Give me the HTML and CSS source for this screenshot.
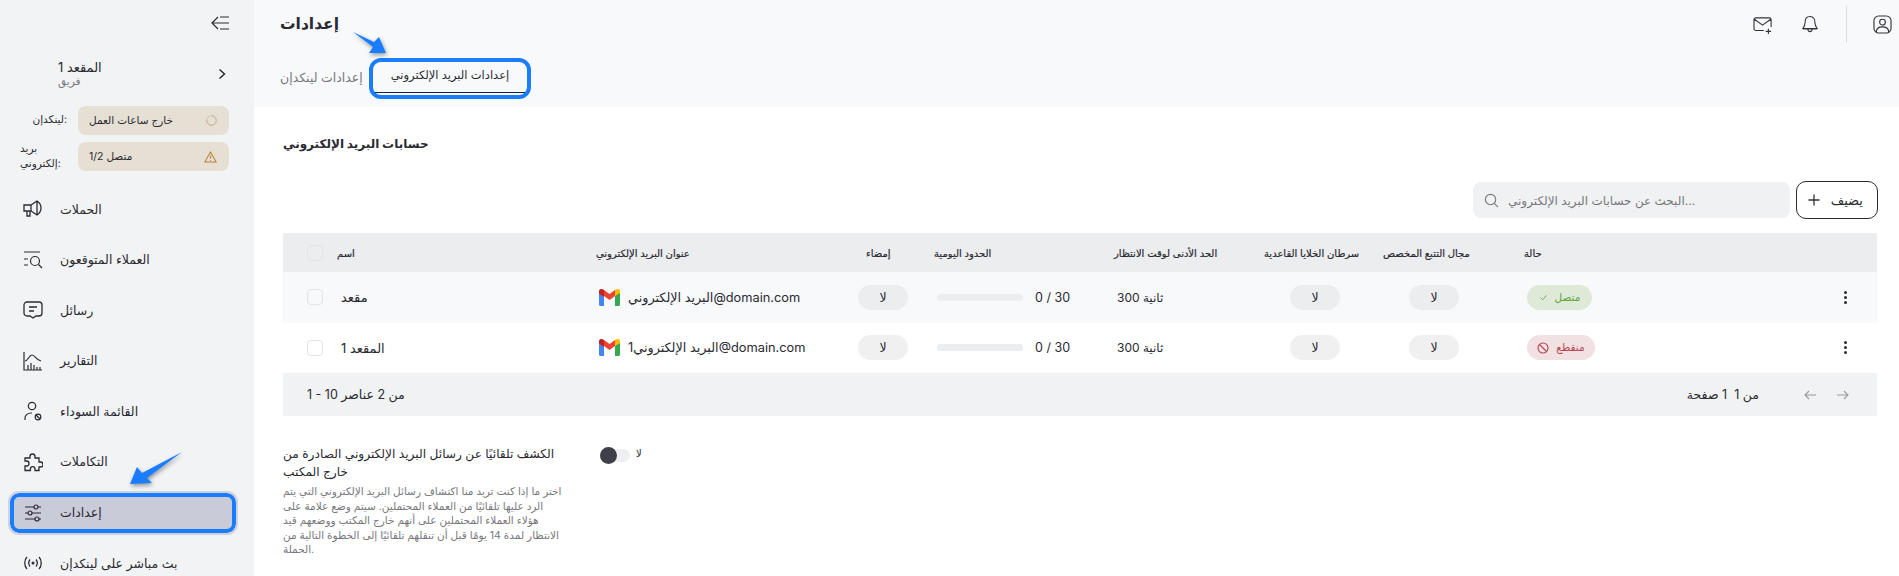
FILE: index.html
```html
<!DOCTYPE html>
<html lang="ar" dir="ltr">
<head>
    <meta charset="UTF-8">
    <title>إعدادات</title>
    <link rel="stylesheet" href="styles.css">
</head>
<body>
    <!-- Sidebar -->
    <aside class="sidebar">
        <div class="collapse-row">
            <svg class="icon-collapse" viewBox="0 0 18 14" fill="none" stroke="#2b2b33" stroke-width="1.2"><path d="M7 1 1 7l6 6M1 7h17M9 1h9M9 13h9" /></svg>
        </div>
        <div class="team-row">
            <div class="team-text">
                <div class="team-name">المقعد 1</div>
                <div class="team-type">فريق</div>
            </div>
            <svg class="icon-chevron" viewBox="0 0 8 12" fill="none" stroke="#222" stroke-width="1.4"><path d="m1.5 1.500 5 4.500-5 4.500" /></svg>
        </div>
        <div class="status-row">
            <span class="status-label">لينكدإن:</span>
            <div class="status-box">
                <span>خارج ساعات العمل</span>
                <svg class="status-icon" viewBox="0 0 12 12" fill="none" stroke="#b9a47f" stroke-width="1"><path d="M6 .8a5.200 5.200 0 1 1-5.200 5.200" /><path d="M.8 6A5.200 5.200 0 0 1 6 .8" stroke-dasharray="1 1" /></svg>
            </div>
        </div>
        <div class="status-row">
            <span class="status-label wrap">بريد إلكتروني:</span>
            <div class="status-box">
                <span>1/2 متصل</span>
                <svg class="status-icon warn" viewBox="0 0 14 13" fill="none" stroke="#b97f35" stroke-width="1.1"><path d="M7 1 .8 12h12.400zM7 5v3.500M7 9.800v.8" /></svg>
            </div>
        </div>
        <nav class="nav">
            <a class="nav-item">
                <svg class="nav-icon" viewBox="0 0 20 20" fill="none" stroke="#2b2b33" stroke-width="1.300"><path d="M1 6h7v6H1zM8 6l6-4c3 2 4 5 4 7s-1 5-4 7l-6-4M4 12v5h3v-5M14 2v14" /></svg>
                <span>الحملات</span>
            </a>
            <a class="nav-item">
                <svg class="nav-icon" viewBox="0 0 20 20" fill="none" stroke="#2b2b33" stroke-width="1.200"><path d="M1 2h16M1 9h4M1 15h4" /><circle cx="12" cy="11" r="4.500" /><path d="m15.500 14.500 3.500 3.500" /></svg>
                <span>العملاء المتوقعون</span>
            </a>
            <a class="nav-item">
                <svg class="nav-icon" viewBox="0 0 20 20" fill="none" stroke="#2b2b33" stroke-width="1.300"><path d="M4 2h12a3 3 0 0 1 3 3v8a3 3 0 0 1-3 3h-3l-3 2-3-2H4a3 3 0 0 1-3-3V5a3 3 0 0 1 3-3zM6 7h8M6 11h5" /></svg>
                <span>رسائل</span>
            </a>
            <a class="nav-item">
                <svg class="nav-icon" viewBox="0 0 20 20" fill="none" stroke="#2b2b33" stroke-width="1.200"><path d="M1 1v18h18M2 10c3 0 4-6 7-6s4 5 9 6M5 19v-5M8 19v-7M11 19v-5M14 19v-3M17 19v-3" /></svg>
                <span>التقارير</span>
            </a>
            <a class="nav-item">
                <svg class="nav-icon" viewBox="0 0 20 20" fill="none" stroke="#2b2b33" stroke-width="1.200"><circle cx="9" cy="5" r="3.700" /><path d="M2 19v-2c0-3 3-5 6-5h1" /><circle cx="15" cy="16" r="2.800" /><path d="m13 14 4 4" /></svg>
                <span>القائمة السوداء</span>
            </a>
            <a class="nav-item">
                <svg class="nav-icon" viewBox="0 0 20 20" fill="none" stroke="#2b2b33" stroke-width="1.300"><path d="M7 4.500a2.500 2.500 0 0 1 5 0V6h4v4h1.500a2.300 2.300 0 0 1 0 5H16v3.500h-4V17a2.300 2.300 0 0 0-4.600 0v1.500H2V14h1.500a2.500 2.500 0 0 0 0-5H2V6h5z" /></svg>
                <span>التكاملات</span>
            </a>
            <a class="nav-item active">
                <svg class="nav-icon" viewBox="0 0 20 20" fill="none" stroke="#2b2b33" stroke-width="1.200"><path d="M2 4h9M15 4h3M2 10h3M9 10h9M2 16h10M16 16h2" /><circle cx="13" cy="4" r="2" /><circle cx="7" cy="10" r="2" /><circle cx="14" cy="16" r="2" /></svg>
                <span>إعدادات</span>
            </a>
            <a class="nav-item">
                <svg class="nav-icon" viewBox="0 0 20 20" fill="none" stroke="#2b2b33" stroke-width="1.300"><path d="M4 4c-3 3-3 9 0 12M16 4c3 3 3 9 0 12M7 6.500c-1.500 2-1.500 5 0 7M13 6.500c1.500 2 1.500 5 0 7" /><circle cx="10" cy="10" r=".9" fill="#2b2b33" /></svg>
                <span>بث مباشر على لينكدإن</span>
            </a>
        </nav>
        <!-- annotation arrow -->
        <svg class="arrow arrow-side" viewBox="0 0 60 36"><polygon points="2,34 9,17 14,23 54,2 19,28 24,33" /></svg>
    </aside>

    <main class="main">
        <header class="top">
            <div class="top-row">
                <h1 class="page-title">إعدادات</h1>
                <div class="top-actions">
                    <svg class="top-icon mail" viewBox="0 0 22 20" fill="none" stroke="#33333b" stroke-width="1.200"><path d="M12 15H3a2 2 0 0 1-2-2V3a2 2 0 0 1 2-2h15a2 2 0 0 1 2 2v8M1.500 2.500 10.500 9l9-6.500M17 13v6M14 16h6" /></svg>
                    <svg class="top-icon bell" viewBox="0 0 18 20" fill="none" stroke="#33333b" stroke-width="1.200"><path d="M9 1c-4 0-5.500 3-5.500 6.500 0 3-1 5-2.500 7h16c-1.500-2-2.500-4-2.500-7C14.500 4 13 1 9 1zM6.500 14.500c0 2 1 3.500 2.500 3.500s2.500-1.500 2.500-3.500M1 15h16" /></svg>
                    <span class="top-divider"></span>
                    <svg class="top-icon user" viewBox="0 0 20 20" fill="none" stroke="#33333b" stroke-width="1.200"><rect x="1" y="1" width="18" height="18" rx="5" /><circle cx="10" cy="7.500" r="3" /><path d="M3.500 18c0-4 3-5.500 6.500-5.500s6.500 1.500 6.500 5.500" /></svg>
                </div>
            </div>
            <div class="tabs">
                <a class="tab">إعدادات لينكدإن</a>
                <a class="tab tab-active"><span>إعدادات البريد الإلكتروني</span></a>
            </div>
            <svg class="arrow arrow-top" viewBox="0 0 36 24"><polygon points="1,1 22,11 27,6 34,22 17,22 21,16" /></svg>
        </header>

        <section class="content">
            <h2 class="section-title">حسابات البريد الإلكتروني</h2>

            <div class="toolbar">
                <div class="search">
                    <svg class="search-icon" viewBox="0 0 16 16" fill="none" stroke="#777" stroke-width="1.200"><circle cx="7" cy="7" r="5.500" /><path d="m11 11 4 4" /></svg>
                    <span>البحث عن حسابات البريد الإلكتروني...</span>
                </div>
                <button class="add-btn">
                    <svg class="plus" viewBox="0 0 12 12" fill="none" stroke="#333" stroke-width="1.300"><path d="M6 .5v11M.5 6h11" /></svg>
                    <span>يضيف</span>
                </button>
            </div>

            <div class="table">
                <div class="row head">
                    <span class="check"></span>
                    <span>اسم</span>
                    <span>عنوان البريد الإلكتروني</span>
                    <span class="h-sign">إمضاء</span>
                    <span>الحدود اليومية</span>
                    <span>الحد الأدنى لوقت الانتظار</span>
                    <span>سرطان الخلايا القاعدية</span>
                    <span>مجال التتبع المخصص</span>
                    <span>حالة</span>
                    <span></span>
                </div>
                <div class="row shaded">
                    <span class="check"></span>
                    <span class="name">مقعد</span>
                    <span class="email"><svg class="gmail" viewBox="0 0 21 17"><path fill="#4285f4" d="M0 2v13.500c0 .8.700 1.500 1.500 1.500H5V7z" /><path fill="#34a853" d="M16 7v10h3.500c.8 0 1.500-.7 1.500-1.500V2z" /><path fill="#ea4335" d="M5 7V1l5.500 4L16 1v6l-5.500 4z" /><path fill="#c5221f" d="M0 2v2.500L5 8V1L3 0C1.500-.3 0 .8 0 2z" /><path fill="#fbbc04" d="M16 1v6l5-3V2c0-1.500-1.500-2.500-3-2z" /></svg><span>البريد الإلكتروني@domain.com</span></span>
                    <span class="pill">لا</span>
                    <span class="limit"><span class="bar"></span><span>0 / 30</span></span>
                    <span class="wait">300 ثانية</span>
                    <span class="pill indent">لا</span>
                    <span class="pill indent">لا</span>
                    <span class="badge ok"><svg class="badge-icon" viewBox="0 0 12 12" fill="none" stroke="#5aa63c" stroke-width="1.100"><path d="m2 6 3 3 5-6" /></svg>متصل</span>
                    <span class="kebab"><i></i><i></i><i></i></span>
                </div>
                <div class="row">
                    <span class="check"></span>
                    <span class="name">المقعد 1</span>
                    <span class="email"><svg class="gmail" viewBox="0 0 21 17"><path fill="#4285f4" d="M0 2v13.500c0 .8.700 1.500 1.500 1.500H5V7z" /><path fill="#34a853" d="M16 7v10h3.500c.8 0 1.500-.7 1.500-1.500V2z" /><path fill="#ea4335" d="M5 7V1l5.500 4L16 1v6l-5.500 4z" /><path fill="#c5221f" d="M0 2v2.500L5 8V1L3 0C1.500-.3 0 .8 0 2z" /><path fill="#fbbc04" d="M16 1v6l5-3V2c0-1.500-1.500-2.500-3-2z" /></svg><span>البريد الإلكتروني1@domain.com</span></span>
                    <span class="pill">لا</span>
                    <span class="limit"><span class="bar"></span><span>0 / 30</span></span>
                    <span class="wait">300 ثانية</span>
                    <span class="pill indent">لا</span>
                    <span class="pill indent">لا</span>
                    <span class="badge off"><svg class="badge-icon big" viewBox="0 0 12 12" fill="none" stroke="#b5434f" stroke-width="1.100"><circle cx="6" cy="6" r="5" /><path d="m2.500 2.500 7 7" /></svg>منقطع</span>
                    <span class="kebab"><i></i><i></i><i></i></span>
                </div>
                <div class="table-foot">
                    <span>1 - 10 من 2 عناصر</span>
                    <div class="pager">
                        <span>من 1 &nbsp;1 صفحة</span>
                        <svg class="pager-arrow" viewBox="0 0 12 10" fill="none" stroke="#9a9a9f" stroke-width="1.100"><path d="M5 1 1 5l4 4M1 5h11" /></svg>
                        <svg class="pager-arrow" viewBox="0 0 12 10" fill="none" stroke="#9a9a9f" stroke-width="1.100"><path d="m7 1 4 4-4 4M0 5h11" /></svg>
                    </div>
                </div>
            </div>

            <div class="setting">
                <div class="setting-text">
                    <div class="setting-title">الكشف تلقائيًا عن رسائل البريد الإلكتروني الصادرة من خارج المكتب</div>
                    <p class="setting-desc">اختر ما إذا كنت تريد منا اكتشاف رسائل البريد الإلكتروني التي يتم<br>الرد عليها تلقائيًا من العملاء المحتملين. سيتم وضع علامة على<br>هؤلاء العملاء المحتملين على أنهم خارج المكتب ووضعهم قيد<br>الانتظار لمدة 14 يومًا قبل أن تنقلهم تلقائيًا إلى الخطوة التالية من<br>الحملة.</p>
                </div>
                <div class="toggle"><span class="knob"></span></div>
                <span class="toggle-label">لا</span>
            </div>
        </section>
    </main>
</body>
</html>
```

FILE: styles.css
```css
* {
    box-sizing: border-box;
}

body {
    margin: 0;
    height: 576px;
    overflow: hidden;
    display: flex;
    background-color: #fff;
    color: #2a2a32;
    font-family: Inter, "DejaVu Sans", sans-serif;
    font-size: 12px;
}

/* Sidebar */
.sidebar {
    position: relative;
    width: 254px;
    flex-shrink: 0;
    height: 576px;
    overflow: hidden;
    background-color: #f2f3f5;
}

.collapse-row {
    display: flex;
    justify-content: flex-end;
    padding: 16px 25px 0 0;
    height: 46px;
}

.icon-collapse {
    width: 18px;
    height: 14px;
}

.team-row {
    display: flex;
    align-items: center;
    justify-content: space-between;
    height: 40px;
    margin-top: 8px;
    padding: 0 28px 0 58px;
}

.team-name {
    font-size: 13px;
    line-height: 15px;
}

.team-type {
    font-size: 10.500px;
    line-height: 14px;
    color: #77777d;
}

.icon-chevron {
    width: 8px;
    height: 12px;
}

.status-row {
    display: flex;
    align-items: center;
    justify-content: flex-end;
    height: 29px;
    margin-bottom: 7px;
    padding-right: 25px;
}

.team-row + .status-row {
    margin-top: 12px;
}

.status-label {
    margin-right: 11px;
    font-size: 10.500px;
    line-height: 14.500px;
}

.status-label.wrap {
    width: 40px;
    margin-right: 18px;
}

.status-box {
    display: flex;
    align-items: center;
    justify-content: space-between;
    width: 151px;
    height: 29px;
    padding: 0 12px 0 11px;
    border-radius: 8px;
    background-color: #e6dfd4;
    font-size: 10.500px;
}

.status-icon {
    width: 11px;
    height: 11px;
}

.status-icon.warn {
    width: 13px;
    height: 12px;
}

.nav {
    margin: 18px 0 0 10px;
    width: 226px;
}

.nav-item {
    display: flex;
    align-items: center;
    gap: 17px;
    height: 40px;
    margin-bottom: 10.600px;
    padding-left: 13px;
    font-size: 12.500px;
}

.nav-item.active {
    padding-left: 9px;
    border: 4px solid #1a7cff;
    border-radius: 9px;
    background-color: #c9cbd9;
    outline: 2px solid #cfd1dc;
    outline-offset: 0;
}

.nav-icon {
    width: 20px;
    height: 20px;
    flex-shrink: 0;
}

.arrow {
    position: absolute;
    fill: #1a7cff;
    filter: drop-shadow(1px 2px 2px rgba(0, 0, 0, 0.4));
}

.arrow-side {
    left: 128px;
    top: 450px;
    width: 60px;
    height: 36px;
}

.arrow-top {
    left: 98px;
    top: 31px;
    width: 36px;
    height: 24px;
}

/* Header */
.main {
    flex-grow: 1;
    min-width: 0;
}

.top {
    position: relative;
    height: 107px;
    padding-left: 26px;
    background-color: #f8f9fb;
}

.top-row {
    display: flex;
    align-items: center;
    justify-content: space-between;
    height: 48px;
}

.page-title {
    margin: 0 0 2px;
    font-size: 15.500px;
    font-weight: bold;
}

.top-actions {
    display: flex;
    align-items: center;
    height: 100%;
    padding-right: 7px;
}

.top-icon {
    width: 20px;
    height: 18px;
}

.top-icon.mail {
    margin-top: 3px;
}

.top-icon.bell {
    width: 16px;
    height: 19px;
    margin-left: 29px;
}

.top-divider {
    width: 1px;
    height: 37px;
    margin-left: 28px;
    background-color: #dcdde0;
}

.top-icon.user {
    width: 19px;
    height: 19px;
    margin-left: 26px;
}

.tabs {
    display: flex;
    align-items: center;
    gap: 9px;
    height: 41px;
    margin-top: 10px;
    font-size: 12.500px;
}

.tab {
    width: 80px;
    margin-bottom: 2px;
    white-space: nowrap;
    color: #77777d;
}

.tab-active {
    width: 162px;
    height: 41px;
    margin-bottom: 0;
    padding: 2px;
    border: 4px solid #1a7cff;
    border-radius: 12px;
    color: #2a2a32;
    font-size: 11.500px;
}

.tab-active span {
    display: block;
    height: 29px;
    line-height: 23px;
    text-align: center;
    border-bottom: 1px solid #1e2050;
}

/* Content */
.content {
    padding: 28px 22px 0 29px;
}

.section-title {
    margin: 0;
    font-size: 12px;
    line-height: 18px;
    font-weight: bold;
}

.toolbar {
    display: flex;
    justify-content: flex-end;
    gap: 6px;
    height: 38px;
    margin: 28px -1px 0 0;
}

.search {
    display: flex;
    align-items: center;
    gap: 9px;
    width: 317px;
    height: 36px;
    margin-top: 1px;
    padding-left: 11px;
    border-radius: 8px;
    background-color: #f0f1f3;
    color: #77777d;
    font-size: 12px;
}

.search-icon {
    width: 15px;
    height: 15px;
}

.add-btn {
    display: flex;
    align-items: center;
    justify-content: space-between;
    width: 82px;
    height: 38px;
    padding: 0 14px 0 11px;
    border: 1px solid #2a2a32;
    border-radius: 10px;
    background-color: #fff;
    color: #2a2a32;
    font-family: inherit;
    font-size: 13px;
}

.plus {
    width: 12px;
    height: 12px;
}

.table {
    margin-top: 14px;
}

.row {
    display: grid;
    grid-template-columns: 30px 259px 262px 76px 180px 150px 119px 141px 1fr 37px;
    align-items: center;
    height: 50.500px;
    padding-left: 24px;
    font-size: 12px;
}

.row.head {
    height: 39px;
    background-color: #ecedef;
    font-size: 10px;
    -webkit-text-stroke: 0.2px #2a2a32;
}

.row.shaded {
    background-color: #f8f9fb;
}

.check {
    width: 16px;
    height: 16px;
    border: 1px solid #e3e4e6;
    border-radius: 4px;
    background-color: #fff;
}

.head .check,
.shaded .check {
    background-color: transparent;
}

.h-sign {
    margin-left: 8px;
}

.name {
    margin-left: 4px;
    font-size: 13px;
}

.email {
    display: flex;
    align-items: center;
    gap: 8px;
    margin-left: 3px;
    font-size: 12.800px;
    white-space: nowrap;
}

.gmail {
    width: 21px;
    height: 17px;
}

.pill {
    display: flex;
    align-items: center;
    justify-content: center;
    width: 50px;
    height: 25px;
    border-radius: 13px;
    background-color: #ecedef;
    font-size: 12.500px;
}

.row:not(.shaded) .pill {
    background-color: #f0f0f1;
}

.pill.indent {
    margin-left: 26px;
}

.limit {
    display: flex;
    align-items: center;
    gap: 12px;
    margin-left: 3px;
    font-size: 12.500px;
}

.bar {
    width: 86px;
    height: 7px;
    border-radius: 4px;
    background-color: #ecedef;
}

.wait {
    margin-left: 3px;
}

.badge {
    display: inline-flex;
    align-items: center;
    justify-content: center;
    gap: 7px;
    justify-self: start;
    width: 65px;
    height: 25px;
    margin-left: 3px;
    border-radius: 13px;
    font-size: 10.500px;
}

.badge.ok {
    background-color: #dfe9d8;
    color: #5aa63c;
}

.badge.off {
    width: 68px;
    background-color: #f2e1e3;
    color: #b5434f;
}

.badge-icon {
    width: 9px;
    height: 9px;
}

.badge-icon.big {
    width: 12px;
    height: 12px;
}

.kebab {
    display: flex;
    flex-direction: column;
    gap: 2px;
    margin-left: 4px;
}

.kebab i {
    width: 3px;
    height: 3px;
    border-radius: 50%;
    background-color: #2a2a32;
}

.table-foot {
    display: flex;
    align-items: center;
    justify-content: space-between;
    height: 43px;
    padding: 0 28px 0 24px;
    background-color: #f1f2f4;
    font-size: 12.500px;
}

.pager {
    display: flex;
    align-items: center;
}

.pager-arrow {
    width: 12px;
    height: 10px;
    margin-left: 21px;
}

.pager span {
    margin-right: 24px;
}

/* Auto detect setting */
.setting {
    display: flex;
    align-items: flex-start;
    margin-top: 29px;
}

.setting-text {
    width: 287px;
    margin-right: 30px;
}

.setting-title {
    width: 287px;
    font-size: 12.200px;
    line-height: 18px;
}

.setting-desc {
    margin: 4px 0 0;
    color: #77777d;
    font-size: 10.500px;
    line-height: 14.500px;
    white-space: nowrap;
}

.toggle {
    position: relative;
    width: 30px;
    height: 13px;
    margin-top: 4px;
    border-radius: 7px;
    background-color: #efeff1;
}

.knob {
    position: absolute;
    left: 0;
    top: -2px;
    width: 17px;
    height: 17px;
    border-radius: 50%;
    background-color: #3f3f4a;
}

.toggle-label {
    margin: 2px 0 0 6px;
    font-size: 10px;
}
```
